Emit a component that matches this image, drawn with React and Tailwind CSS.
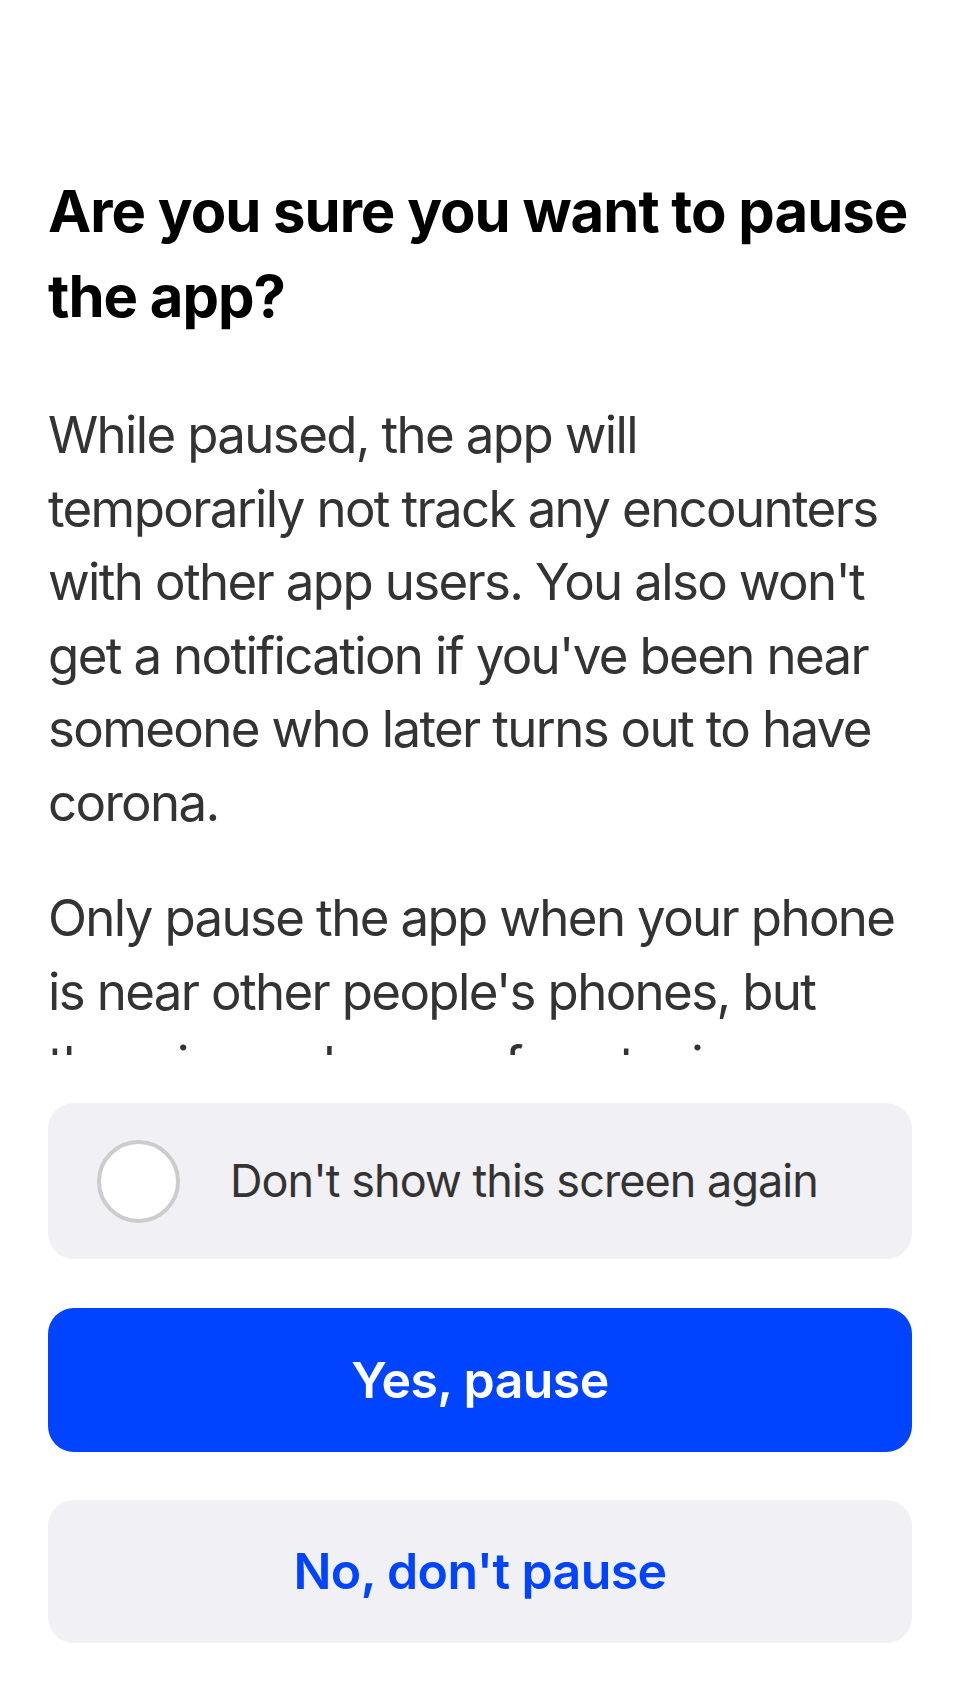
export default function App() {
  return (
    <div
      className="w-[960px] h-[1704px] bg-white flex flex-col overflow-hidden"
      style={{ fontFamily: "Inter, 'Noto Sans', sans-serif" }}
    >
      <div className="h-[1055px] overflow-hidden px-12 pt-[169px] shrink-0">
        <h1 className="text-[58px] leading-[85px] font-bold text-black tracking-[-1px]">
          Are you sure you want to pause the app?
        </h1>
        <p className="mt-[59px] max-w-[852px] text-[51px] leading-[73.5px] text-[#333333] tracking-[-1.65px]">
          While paused, the app will temporarily not track any encounters with other app users. You also won't get a notification if you've been near someone who later turns out to have corona.
        </p>
        <p className="mt-[42px] max-w-[852px] text-[51px] leading-[73.5px] text-[#333333] tracking-[-1.65px]">
          Only pause the app when your phone is near other people's phones, but there is no chance of contagion.
        </p>
      </div>
      <div className="flex flex-col px-12 pt-12">
        <div className="h-[156px] rounded-[26px] bg-[#f0f0f5] flex items-center pl-[49px]">
          <div className="w-[83px] h-[83px] rounded-full border-[4px] border-[#cccccc] bg-white shrink-0" />
          <span className="ml-[50px] text-[45px] text-[#333333] tracking-[-0.95px]">
            Don't show this screen again
          </span>
        </div>
        <button className="mt-[49px] h-[144px] rounded-[26px] bg-[#0044ff] text-white text-[50px] font-semibold tracking-[-0.6px] flex items-center justify-center">
          Yes, pause
        </button>
        <button className="mt-12 h-[143px] rounded-[26px] bg-[#f0f0f5] text-[#0044ff] text-[50px] font-semibold tracking-[-0.6px] flex items-center justify-center">
          No, don't pause
        </button>
      </div>
    </div>
  );
}
